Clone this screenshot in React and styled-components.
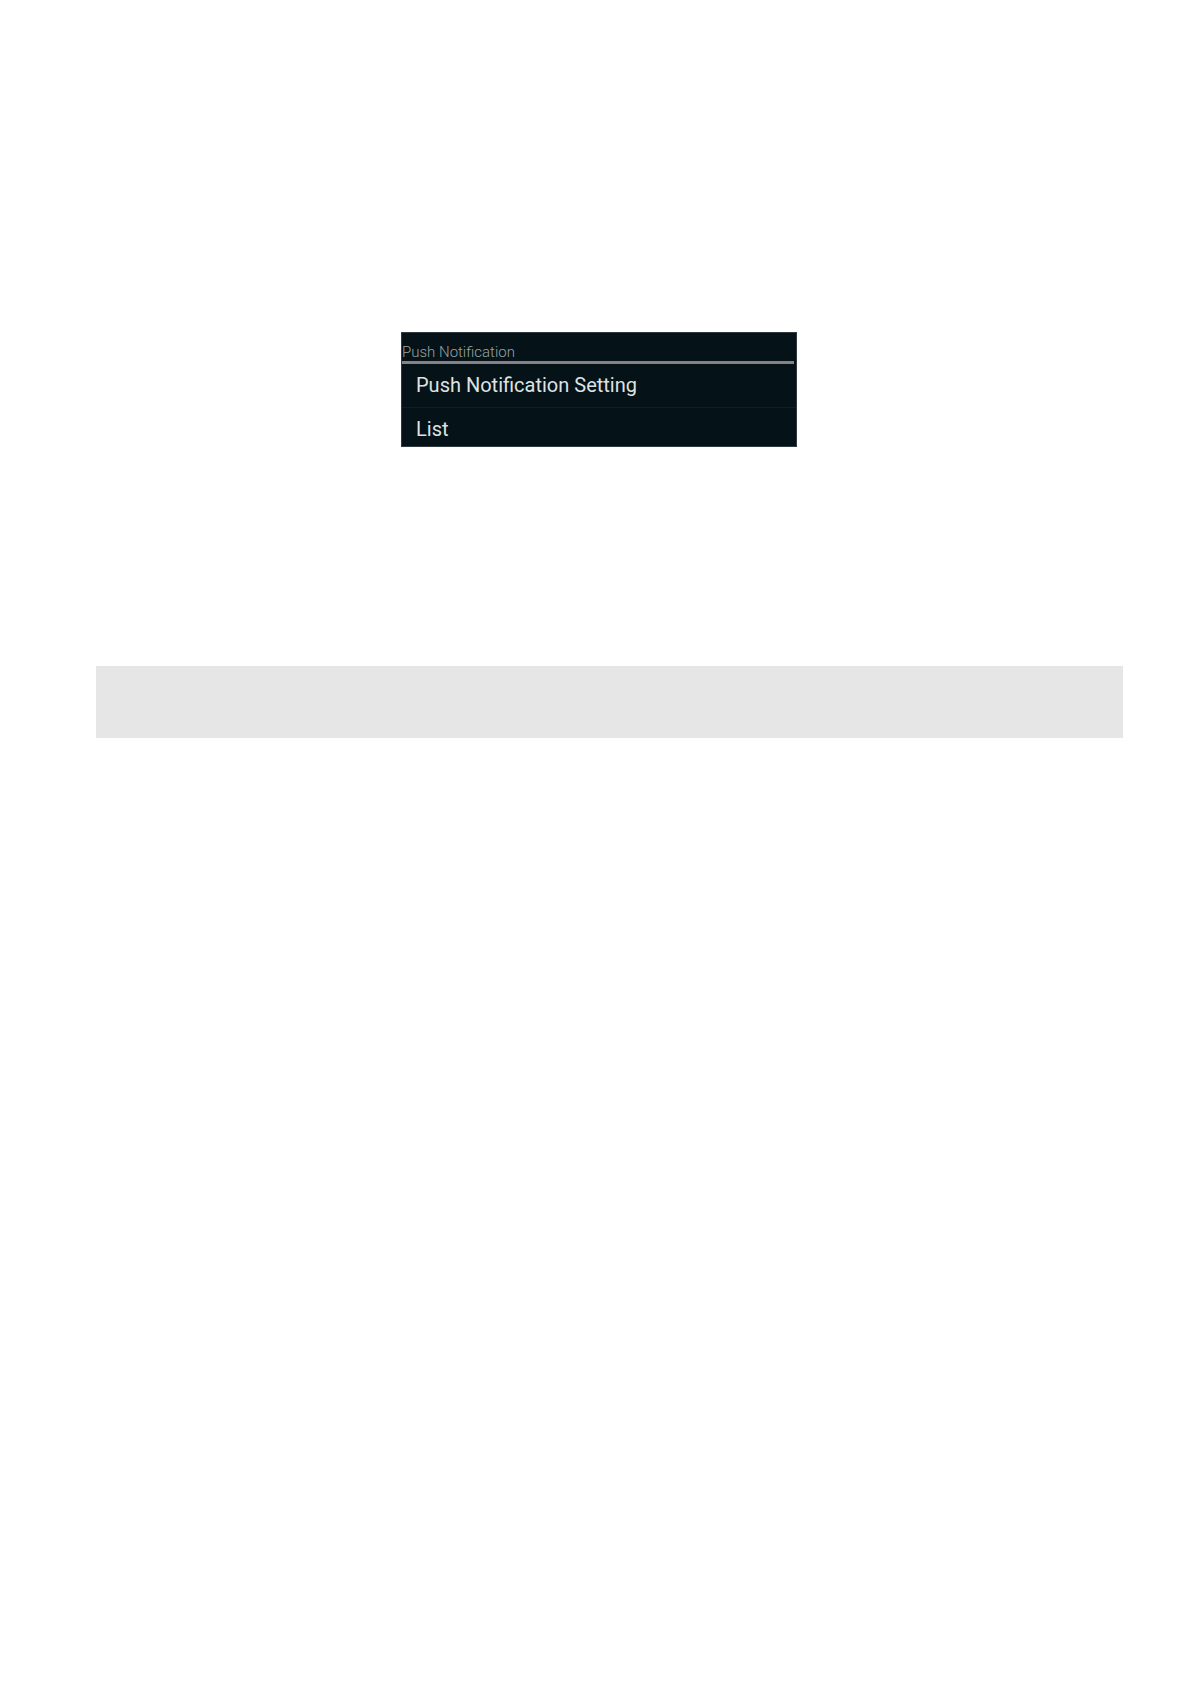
import styled, { createGlobalStyle } from "styled-components";

const items = ["Push Notification Setting", "List"];

const App = () => {
  return (
    <>
      <GlobalStyle />
      <Page>
        <Panel>
          <PanelTitle>Push Notification</PanelTitle>
          <Menu>
            {items.map((item) => (
              <MenuItem key={item}>
                <MenuButton type="button">{item}</MenuButton>
              </MenuItem>
            ))}
          </Menu>
        </Panel>
        <Band />
      </Page>
    </>
  )
};

export default App;


const GlobalStyle = createGlobalStyle`
  body {
    margin: 0;
    background-color: #fff;
    font-family: Roboto, "Liberation Sans", sans-serif;
  }
`

const Page = styled.main`
  box-sizing: border-box;
  min-height: 100vh;
  display: flex;
  flex-direction: column;
  padding: 332px 68px 0 96px;
`

const Panel = styled.section`
  box-sizing: border-box;
  width: 396px;
  align-self: center;
  margin-right: 21px;
  border: 1px solid #30393d;
  background-color: #051217;
`

const PanelTitle = styled.h2`
  margin: 0 2px 0 0;
  padding-top: 10px;
  border-bottom: 3px solid #858286;
  color: #9aa2a3;
  font-size: 15px;
  font-weight: 300;
  line-height: 18px;
`

const Menu = styled.ul`
  margin: 0;
  padding: 0;
  list-style: none;
`

const MenuItem = styled.li`
  & + & {
    border-top: 1px solid #0d2025;
  }
`

const MenuButton = styled.button`
  display: block;
  width: 100%;
  padding: 10px 14px;
  border: none;
  background: none;
  color: #dfe2e2;
  font-family: inherit;
  font-size: 20px;
  line-height: 23px;
  text-align: left;
  cursor: pointer;

  ${MenuItem}:last-child & {
    padding-bottom: 5px;
  }
`

const Band = styled.div`
  height: 72px;
  margin-top: 219px;
  background-color: #e6e6e6;
`
